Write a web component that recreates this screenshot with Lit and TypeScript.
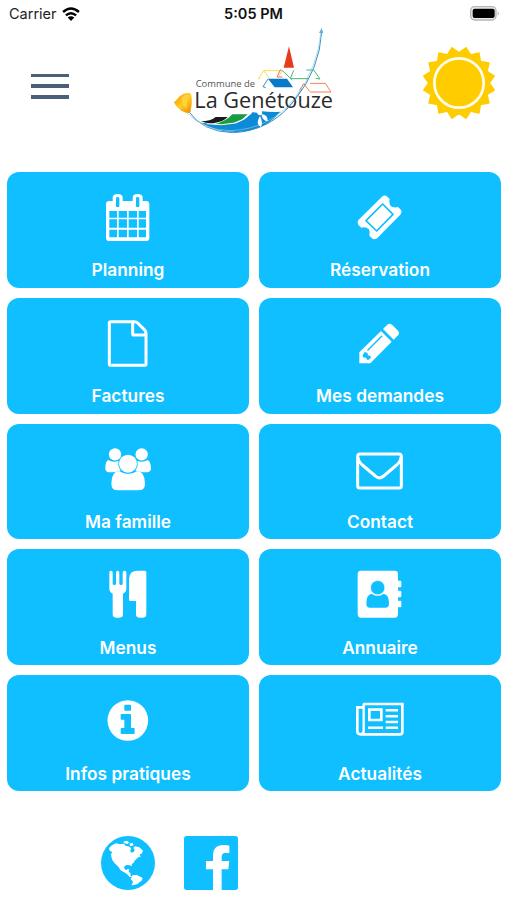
import { LitElement, html, svg, css, type TemplateResult } from "lit";
import { customElement, property } from "lit/decorators.js";

interface Tile {
  label: string;
  box: string;
  icon: TemplateResult;
}

const calendar = svg`
  <path fill-rule="evenodd" fill="#fff" d="M328 107H338V97Q338 86 353 86Q368 86 368 97V107H398V97Q398 86 413 86Q428 86 428 97V107H438Q448 107 448 117V217Q448 227 438 227H328Q318 227 318 217V117Q318 107 328 107Z
  M348 99V122Q348 126 353 126Q358 126 358 122V99Q358 95 353 95Q348 95 348 99Z M408 99V122Q408 126 413 126Q418 126 418 122V99Q418 95 413 95Q408 95 408 99Z
  M328 137V157H351V137Z M356 137V157H381V137Z M386 137V157H411V137Z M416 137V157H438V137Z
  M328 162V187H351V162Z M356 162V187H381V162Z M386 162V187H411V162Z M416 162V187H438V162Z
  M328 193V216H351V193Z M356 193V216H381V193Z M386 193V216H411V193Z M416 193V216H438V193Z"/>`;

const ticket = svg`
  <path fill="#fff" d="M311 163L381 94Q389 87 397 94L404 101Q400 112 406 121Q416 129 429 125L436 132Q443 139 436 148L367 218Q358 226 350 218L343 211Q347 200 341 191Q331 183 319 187L311 180Q305 171 311 163Z"/>
  <path fill="none" stroke="#0fbfff" stroke-width="5" stroke-linejoin="round" d="M383 116L414 147L365 197L333 166Z"/>`;

const file = svg`
  <path fill="none" stroke="#fff" stroke-width="9" stroke-linejoin="round" d="M331 79H403Q409 79 413 83L433 103Q438 108 438 115V206Q438 210 434 210H332Q328 210 328 206V83Q328 79 332 79ZM398 80V115Q398 119 402 119H437"/>`;

const pencil = svg`
  <path fill="#fff" d="M1078 171L1143 107L1175 139L1111 204H1078Z"/>
  <path fill="#fff" d="M1149 101L1162 88Q1169 82 1176 88L1194 106Q1200 113 1194 120L1181 133Z"/>
  <path fill="#0fbfff" d="M1101 164L1145 120L1148 123L1104 167Z M1088 180L1094 170L1103 173V179L1112 183V189L1103 195L1098 187L1089 186Z"/>`;

const people = svg`
  <g fill="#fff">
    <path d="M325 119Q338 127 356 122Q352 139 362 150Q354 156 327 156Q316 155 316 144Q316 123 325 119Z"/>
    <path d="M443 119Q430 127 412 122Q416 139 406 150Q414 156 441 156Q453 155 453 144Q452 123 443 119Z"/>
    <circle cx="345" cy="102" r="18.5"/><circle cx="425" cy="102" r="18.5"/>
    <circle cx="384" cy="130" r="27"/>
    <path d="M357 152Q371 161 384 161Q398 161 412 152Q435 154 435 190Q435 210 415 210H354Q334 210 334 190Q334 154 357 152Z"/>
  </g>`;

const envelope = svg`
  <g fill="none" stroke="#fff" stroke-width="9" stroke-linejoin="round">
    <rect x="1073" y="101" width="131" height="102" rx="7"/>
    <path d="M1074 110Q1074 122 1087 134L1126 167Q1138 178 1151 167L1190 134Q1203 122 1203 110"/>
  </g>`;

const cutlery = svg`
  <path fill="#fff" d="M328 84Q328 78 333 78Q338 78 338 84V117Q338 121 343 121Q348 121 348 117V84Q348 78 353 78Q358 78 358 84V117Q358 121 363 121Q368 121 368 117V84Q368 78 373 78Q379 78 379 84V132Q379 142 369 147V209Q369 219 359 219H348Q338 219 338 209V147Q328 142 328 132Z"/>
  <path fill="#fff" d="M387 103Q387 78 413 78H434Q439 78 439 83V209Q439 219 429 219H418Q408 219 408 209V169H391Q387 169 387 165Z"/>`;

const addressBook = svg`
  <path fill="#fff" d="M1083 78H1184Q1194 78 1194 88V108H1201Q1204 108 1204 111V125Q1204 128 1201 128H1194V138H1201Q1204 138 1204 141V155Q1204 158 1201 158H1194V168H1201Q1204 168 1204 171V185Q1204 188 1201 188H1194V208Q1194 219 1184 219H1083Q1073 219 1073 208V88Q1073 78 1083 78Z"/>
  <path fill="#0fbfff" d="M1115 147Q1133 160 1151 147Q1167 149 1167 178Q1167 189 1156 189H1110Q1099 189 1099 178Q1099 149 1115 147Z"/>
  <circle cx="1133" cy="129" r="21.5" fill="#0fbfff" stroke="#fff" stroke-width="2"/>`;

const info = svg`
  <circle cx="383.500" cy="151.500" r="61" fill="#fff"/>
  <path fill="#0fbfff" d="M375 104H391Q393 104 393 106V120Q393 122 391 122H375Q373 122 373 120V106Q373 104 375 104Z M365 132H391Q393 132 393 134V174H401Q404 174 404 176V189Q404 192 401 192H365Q362 192 362 189V176Q362 174 365 174H373V149H365Q362 149 362 147V134Q362 132 365 132Z"/>`;

const newspaper = svg`
  <g fill="none" stroke="#fff" stroke-width="8">
    <path d="M1089 102H1207V186Q1207 193 1200 193H1082Q1072 193 1072 184V112H1090"/>
    <path stroke-width="7" d="M1091 101V183Q1091 192 1082 192"/>
    <path d="M1108 119H1144V150H1108Z"/>
    <path stroke-width="7.500" d="M1157 121H1194M1157 139H1194M1157 156H1194M1157 173H1194M1104 173H1149"/>
  </g>`;

const TILES: Tile[] = [
  { label: "Planning", box: "294 65 180 180", icon: calendar },
  { label: "Réservation", box: "285 65 180 180", icon: ticket },
  { label: "Factures", box: "294 53 180 180", icon: file },
  { label: "Mes demandes", box: "1050 53 180 180", icon: pencil },
  { label: "Ma famille", box: "294 56 180 180", icon: people },
  { label: "Contact", box: "1050 56 180 180", icon: envelope },
  { label: "Menus", box: "294 58 180 180", icon: cutlery },
  { label: "Annuaire", box: "1050 58 180 180", icon: addressBook },
  { label: "Infos pratiques", box: "294 60 180 180", icon: info },
  { label: "Actualités", box: "1050 60 180 180", icon: newspaper },
];

// Rays sit half a step off the vertical axis.
const SUN_RAYS = 16;
const sunPoints = Array.from({ length: SUN_RAYS * 2 }, (_, i) => {
  const angle = ((i + 1) * Math.PI) / SUN_RAYS;
  const radius = i % 2 ? 90 : 107;
  return `${(111 + radius * Math.sin(angle)).toFixed(1)},${(111 - radius * Math.cos(angle)).toFixed(1)}`;
}).join(" ");

@customElement("menu-tile")
export class MenuTile extends LitElement {
  @property({ attribute: false }) tile!: Tile;

  static styles = css`
    :host {
      display: flex;
      flex-direction: column;
      align-items: center;
      box-sizing: border-box;
      padding-top: 15px;
      border-radius: 12px;
      background: #0fbfff;
      color: #fff;
    }
    .icon {
      width: 60px;
      height: 60px;
      flex: none;
    }
    .label {
      margin-top: 11.4px;
      font: 600 17.3px/24px Inter, sans-serif;
      letter-spacing: 0.02px;
      white-space: nowrap;
    }
  `;

  render() {
    return html`
      <svg class="icon" viewBox=${this.tile.box}>${this.tile.icon}</svg>
      <span class="label">${this.tile.label}</span>
    `;
  }
}

@customElement("app-root")
export class AppRoot extends LitElement {
  static styles = css`
    :host {
      display: flex;
      flex-direction: column;
      height: 900px;
      overflow: hidden;
      background: #fff;
      font-family: Inter, sans-serif;
    }
    svg {
      display: block;
      flex: none;
    }
    .status {
      display: grid;
      grid-template-columns: 1fr auto 1fr;
      align-items: center;
      height: 27px;
      padding: 0 7px 0 9px;
      font-size: 14.5px;
      color: #222;
    }
    .carrier {
      display: flex;
      align-items: center;
      gap: 5.5px;
    }
    .time {
      margin-right: 2px;
      font-weight: 600;
      color: #111;
    }
    .battery {
      justify-self: end;
      margin-right: -1px;
    }
    .header {
      display: flex;
      height: 145px;
      padding: 0 11px 0 31px;
      box-sizing: border-box;
    }
    .burger {
      display: flex;
      flex-direction: column;
      gap: 7px;
      width: 38px;
      margin-top: 46.5px;
    }
    .line {
      height: 3.8px;
      background: #4a6078;
    }
    .logo {
      margin-left: 96px;
      margin-top: -2px;
    }
    .sun {
      margin: 19px 0 0 auto;
    }
    .grid {
      display: grid;
      grid-template-columns: 242px 242px;
      grid-auto-rows: 115.8px;
      gap: 10px;
      padding-left: 7px;
    }
    .links {
      display: flex;
      gap: 29px;
      padding: 44.8px 0 0 101px;
    }
  `;

  render() {
    return html`
      <div class="status">
        <div class="carrier">
          <span>Carrier</span>
          <svg width="18" height="14" viewBox="0 0 57 45">
            <g fill="none" stroke="#000" stroke-width="8">
              <path d="M3 16Q28 -6 54 16" />
              <path d="M12 27Q28 13 45 27" />
            </g>
            <path d="M18 34Q28 25 39 34L28.500 45Z" />
          </svg>
        </div>
        <span class="time">5:05 PM</span>
        <svg class="battery" width="31" height="15" viewBox="0 0 93 45">
          <rect x="2" y="2" width="76" height="40" rx="12" fill="#ededed" stroke="#b5b5b5" stroke-width="4" />
          <rect x="8" y="8" width="66" height="28" rx="6" />
          <path d="M83 16Q91 22 83 29Z" fill="#b5b5b5" />
        </svg>
      </div>

      <div class="header">
        <div class="burger">
          <div class="line"></div>
          <div class="line"></div>
          <div class="line"></div>
        </div>
        <svg class="logo" width="175" height="115" viewBox="0 0 525 345">
          <defs>
            <linearGradient id="bell" x1="0" x2="1" y2="1">
              <stop offset="0" stop-color="#ff8a00" />
              <stop offset=".5" stop-color="#ffce20" />
              <stop offset="1" stop-color="#f08a00" />
            </linearGradient>
          </defs>
          <path fill="#0b8bd8" d="M108 293L180 299L214 295Q246 281 262 261L279 264L291 259Q320 262 346 260Q300 317 218 321Q156 322 108 293Z" />
          <path fill="#189b42" d="M144 299Q183 290 202 268H248Q220 299 178 302Z" />
          <path fill="#191b18" d="M108 289Q136 289 152 276L188 276Q176 290 144 295Q124 296 108 289Z" />
          <path fill="none" stroke="#fff" stroke-width="3" d="M125 296Q220 310 262 262" />
          <path fill="none" stroke="#3293c7" stroke-width="3" d="M70 258Q112 320 202 323Q317 319 390 224Q464 132 470 20" />
          <path fill="none" stroke="#9cc9df" stroke-width="2" d="M66 263Q114 317 198 317Q315 312 390 219Q459 127 468 20" />
          <path fill="#5cb3de" d="M470 9L462 24H475Z" />
          <path fill="url(#bell)" d="M27 232Q36 224 44 214Q62 200 78 206Q84 230 75 264Q63 266 50 257Q35 249 27 232Z" />
          <path fill="#ffd23a" d="M50 219Q60 205 73 209Q63 230 67 252Q50 246 50 219Z" />
          <path fill="none" stroke="#ef9a19" stroke-width="2" d="M48 255L72 263M60 244L78 260" />
          <path fill="#e63b1c" d="M372 64L356 128H387Z" />
          <path fill="none" stroke="#f1df62" stroke-width="3" d="M280 162L296 137H351L342 153M280 162L286 158M296 137L312 158" />
          <path fill="none" stroke="#e6543c" stroke-width="2.500" d="M347 133L336 156H352" />
          <path fill="none" stroke="#47b77c" stroke-width="3" d="M350 135L382 165M446 135L465 162L452 160M424 135H446M386 136L376 161H431" />
          <path fill="#0878c8" d="M309 161H366L384 187H329Z" />
          <path fill="none" stroke="#0878c8" stroke-width="2.500" d="M309 162L294 185L302 188" />
          <path fill="none" stroke="#ec8654" stroke-width="3" d="M403 196L417 175M435 175H481L498 201H436M417 177L435 200" />
          <text x="92" y="185" font-family="Open Sans, sans-serif" font-size="28" fill="#555" textLength="178" lengthAdjust="spacingAndGlyphs">Commune de</text>
          <text x="88" y="248" font-family="Open Sans, sans-serif" font-size="64" fill="#2a2a2a" textLength="416" lengthAdjust="spacingAndGlyphs">La Genétouze</text>
          <path fill="none" stroke="#3293c7" stroke-width="2" d="M362 255Q392 227 412 190" />
          <g fill="#fff">
            <path d="M283 247Q298 260 288 271Q275 271 277 261Z" />
            <path d="M289 267Q310 269 308 289Q292 288 289 267Z" />
            <path d="M285 273Q296 295 287 306Q270 298 285 273Z" />
          </g>
        </svg>
        <svg class="sun" width="74" height="74" viewBox="0 0 222 222">
          <polygon points=${sunPoints} fill="#fc0" stroke="#fc0" stroke-width="6" stroke-linejoin="round" />
          <circle cx="111" cy="111" r="74" fill="#fc0" stroke="#fffdf0" stroke-width="8" />
        </svg>
      </div>

      <div class="grid">${TILES.map((tile) => html`<menu-tile .tile=${tile}></menu-tile>`)}</div>

      <div class="links">
        <svg width="54" height="54" viewBox="35 32 162 162">
          <circle cx="116" cy="113" r="81" fill="#0fbfff" />
          <path fill="#fff" d="M59 68L68 60L80 54L92 57L104 55L108 61L121 64L126 70L122 76L127 82L134 79L136 73L132 67L137 63L150 66L161 76L157 85L151 87L154 94L147 96L141 101L136 106L133 112L127 116L128 123L122 120L112 119L105 123L105 131L111 134L116 130L120 133L118 140L124 144L123 150L128 154L121 155L113 146L103 140L94 135L87 124L76 114L69 104L66 94L65 86L69 80L61 76Z" />
          <path fill="#fff" d="M102 49L112 46L120 51L114 56L105 54ZM120 55L129 52L133 60L123 63ZM130 149L143 149L160 158L157 166L150 171L145 176L134 179L127 180L131 169L124 161Z" />
        </svg>
        <svg width="54" height="54" viewBox="284 32 162 162">
          <rect x="284" y="32" width="162" height="162" rx="8" fill="#0fbfff" />
          <path fill="#fff" d="M371 194V132H350V107H371V91Q371 59 402 59Q415 59 420 61V83H408Q397 83 397 95V107H420L417 132H397V194Z" />
        </svg>
      </div>
    `;
  }
}
